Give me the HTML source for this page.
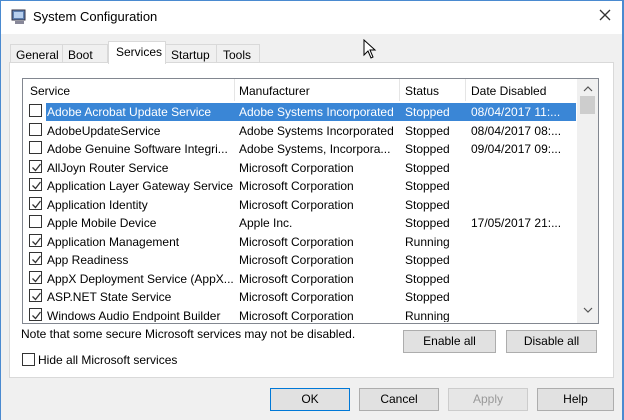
<!DOCTYPE html>
<html><head><style>
*{margin:0;padding:0;box-sizing:border-box}
body{width:624px;height:420px;overflow:hidden;background:#f0f0f0;font-family:"Liberation Sans",sans-serif;font-size:12px;color:#000;position:relative}
.a{position:absolute;white-space:nowrap}
.cb{position:absolute;width:13px;height:13px;border:1px solid #333;background:#fff}
.cb svg{position:absolute;left:1px;top:1px}
.btn{position:absolute;border:1px solid #adadad;background:#e1e1e1;text-align:center;line-height:20px}
</style></head><body>
<div class="a" style="left:0;top:0;width:624px;height:34px;background:#fff"></div>
<div class="a" style="left:0;top:0;width:1px;height:420px;background:#4a8ad0"></div>
<div class="a" style="left:622px;top:0;width:2px;height:420px;background:#4a8ad0"></div>
<div class="a" style="left:0;top:0;width:624px;height:1px;background:#4a8ad0"></div>
<svg class="a" style="left:11px;top:9px" width="16" height="16"><rect x="1" y="1" width="13" height="10" fill="#5d7fb0" stroke="#334" stroke-width="1"/><rect x="3" y="3" width="9" height="6" fill="#b8d0ee"/><rect x="4" y="12" width="9" height="3" fill="#889"/></svg>
<div class="a" style="left:33px;top:9px;font-size:13px">System Configuration</div>
<svg class="a" style="left:599px;top:9px" width="12" height="12"><path d="M1 1L11 11M11 1L1 11" stroke="#333" stroke-width="1.3"/></svg>
<svg class="a" style="left:363px;top:39px" width="14" height="20"><path d="M1 1 L1 16 L5 12 L8 19 L10 18 L7 11 L12 11 Z" fill="#fff" stroke="#000" stroke-width="1"/></svg>
<!-- panel -->
<div class="a" style="left:9px;top:62px;width:605px;height:316px;background:#fff;border:1px solid #d9d9d9"></div>
<div class="a" style="left:10px;top:44px;width:53px;height:19px;border:1px solid #d9d9d9;background:#f0f0f0;padding:3px 0 0 5px">General</div>
<div class="a" style="left:63px;top:44px;width:45px;height:19px;border:1px solid #d9d9d9;border-left:0;background:#f0f0f0;padding:3px 0 0 5px">Boot</div>
<div class="a" style="left:108px;top:41px;width:58px;height:23px;border:1px solid #d9d9d9;border-bottom:0;background:#fff;padding:3px 0 0 7px">Services</div>
<div class="a" style="left:166px;top:44px;width:51px;height:19px;border:1px solid #d9d9d9;border-left:0;background:#f0f0f0;padding:3px 0 0 5px">Startup</div>
<div class="a" style="left:217px;top:44px;width:43px;height:19px;border:1px solid #d9d9d9;border-left:0;background:#f0f0f0;padding:3px 0 0 6px">Tools</div>
<!-- list -->
<div class="a" style="left:22px;top:78px;width:577px;height:246px;border:1px solid #828790;background:#fff;overflow:hidden">
<div class="a" style="left:211px;top:0;width:1px;height:22px;background:#e5e5e5"></div>
<div class="a" style="left:376px;top:0;width:1px;height:22px;background:#e5e5e5"></div>
<div class="a" style="left:442px;top:0;width:1px;height:22px;background:#e5e5e5"></div>
<div class="a" style="left:7px;top:5px">Service</div>
<div class="a" style="left:216px;top:5px">Manufacturer</div>
<div class="a" style="left:382px;top:5px">Status</div>
<div class="a" style="left:448px;top:5px">Date Disabled</div>
<div class="a" style="left:23px;top:24px;width:530px;height:18px;background:#3a86d6"></div>
<div class="a" style="left:554px;top:0;width:21px;height:244px;background:#f0f0f0"></div>
<svg class="a" style="left:560px;top:7px" width="10" height="7"><path d="M1 5L5 1L9 5" fill="none" stroke="#555" stroke-width="1.2"/></svg>
<div class="a" style="left:557px;top:17px;width:15px;height:18px;background:#cdcdcd"></div>
<svg class="a" style="left:560px;top:228px" width="10" height="7"><path d="M1 1L5 5L9 1" fill="none" stroke="#555" stroke-width="1.2"/></svg>
</div>
<div id="rows"></div>
<script>
var r=[[0,"Adobe Acrobat Update Service","Adobe Systems Incorporated","Stopped","08/04/2017 11:..."],
[0,"AdobeUpdateService","Adobe Systems Incorporated","Stopped","08/04/2017 08:..."],
[0,"Adobe Genuine Software Integri...","Adobe Systems, Incorpora...","Stopped","09/04/2017 09:..."],
[1,"AllJoyn Router Service","Microsoft Corporation","Stopped",""],
[1,"Application Layer Gateway Service","Microsoft Corporation","Stopped",""],
[1,"Application Identity","Microsoft Corporation","Stopped",""],
[0,"Apple Mobile Device","Apple Inc.","Stopped","17/05/2017 21:..."],
[1,"Application Management","Microsoft Corporation","Running",""],
[1,"App Readiness","Microsoft Corporation","Stopped",""],
[1,"AppX Deployment Service (AppX...","Microsoft Corporation","Stopped",""],
[1,"ASP.NET State Service","Microsoft Corporation","Stopped",""],
[1,"Windows Audio Endpoint Builder","Microsoft Corporation","Running",""]];
var h="";
r.forEach(function(x,i){var y=104+i*18.5;
var cy=Math.round(y);if(cy+14>322)return;
h+='<div class="cb" style="left:29px;top:'+cy+'px">'+(x[0]?'<svg width="11" height="11"><path d="M1.5 5.5 L4.5 8.5 L9.5 2" fill="none" stroke="#333" stroke-width="1.3"/></svg>':'')+'</div>';
});
r.forEach(function(x,i){var y=105+i*18.5;var c=i==0?"#fff":"#000";
var cl='clip-path:inset(0 0 '+Math.max(0,y+15-323)+'px 0)';
h+='<div class="a" style="left:47px;top:'+y+'px;color:'+c+';'+cl+'">'+x[1]+'</div>';
h+='<div class="a" style="left:239px;top:'+y+'px;color:'+c+';'+cl+'">'+x[2]+'</div>';
h+='<div class="a" style="left:405px;top:'+y+'px;color:'+c+';'+cl+'">'+x[3]+'</div>';
h+='<div class="a" style="left:471px;top:'+y+'px;color:'+c+'">'+x[4]+'</div>';
});
document.getElementById("rows").innerHTML=h;
</script>
<div class="a" style="left:21px;top:327px">Note that some secure Microsoft services may not be disabled.</div>
<div class="cb" style="left:22px;top:353px"></div>
<div class="a" style="left:38px;top:353px">Hide all Microsoft services</div>
<div class="btn" style="left:403px;top:330px;width:93px;height:23px">Enable all</div>
<div class="btn" style="left:506px;top:330px;width:91px;height:23px">Disable all</div>
<div class="btn" style="left:270px;top:388px;width:80px;height:23px;border:1px solid #0078d7">OK</div>
<div class="btn" style="left:359px;top:388px;width:80px;height:23px">Cancel</div>
<div class="btn" style="left:448px;top:388px;width:80px;height:23px;color:#999;border-color:#ccc;background:#e6e6e6">Apply</div>
<div class="btn" style="left:537px;top:388px;width:77px;height:23px">Help</div>
</body></html>
